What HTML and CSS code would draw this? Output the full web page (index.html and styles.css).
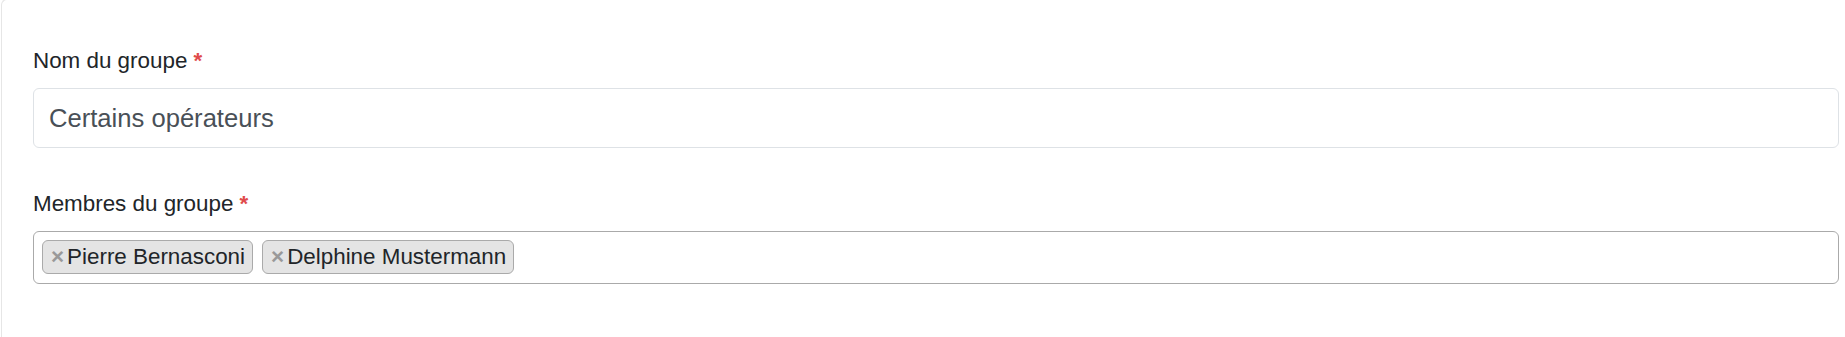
FILE: index.html
```html
<!DOCTYPE html>
<html lang="fr">
<head>
<meta charset="utf-8">
<title>Groupe</title>
<link rel="stylesheet" href="styles.css">
</head>
<body>
<div class="card">
  <div class="field field-name">
    <label class="label" for="nom">Nom du groupe <span class="req">*</span></label>
    <div class="input" id="nom">Certains opérateurs</div>
  </div>
  <div class="field field-members">
    <label class="label">Membres du groupe <span class="req">*</span></label>
    <div class="multi">
      <span class="tag"><span class="tag-x">×</span>Pierre Bernasconi</span>
      <span class="tag"><span class="tag-x">×</span>Delphine Mustermann</span>
    </div>
  </div>
</div>
</body>
</html>
```

FILE: styles.css
```css
html, body {
  margin: 0;
  padding: 0;
  background: #ffffff;
  overflow: hidden;
}
body {
  font-family: "Liberation Sans", Arial, sans-serif;
  color: #212529;
  width: 1845px;
  height: 337px;
}
.card {
  box-sizing: border-box;
  margin-left: 1px;
  margin-top: -1px;
  height: 338px;
  border: 1px solid #e6e6e6;
  border-right: none;
  border-bottom: none;
  border-top-left-radius: 6px;
  padding: 44px 6px 0 31px;
}
.field-members {
  margin-top: 39px;
}
.label {
  display: block;
  font-size: 22.4px;
  line-height: 33.6px;
  margin-bottom: 10.5px;
  color: #212529;
}
.req {
  color: #e04b4b;
  font-weight: bold;
}
.input {
  box-sizing: border-box;
  height: 60px;
  border: 1px solid #dee2e6;
  border-radius: 6px;
  padding: 0 15px;
  display: flex;
  align-items: center;
  font-size: 25.6px;
  color: #495057;
}
.multi {
  box-sizing: border-box;
  height: 53px;
  border: 1px solid #aaaaaa;
  border-radius: 6px;
  padding: 8px 8px;
  display: flex;
  gap: 9px;
  align-items: flex-start;
}
.tag {
  box-sizing: border-box;
  height: 34px;
  display: inline-flex;
  align-items: center;
  background: #e4e4e4;
  border: 1px solid #aaaaaa;
  border-radius: 6px;
  padding: 0 7px 0 8px;
  font-size: 22.4px;
  color: #212529;
}
.tag-x {
  color: #999999;
  font-weight: bold;
  margin-right: 3px;
}
```
